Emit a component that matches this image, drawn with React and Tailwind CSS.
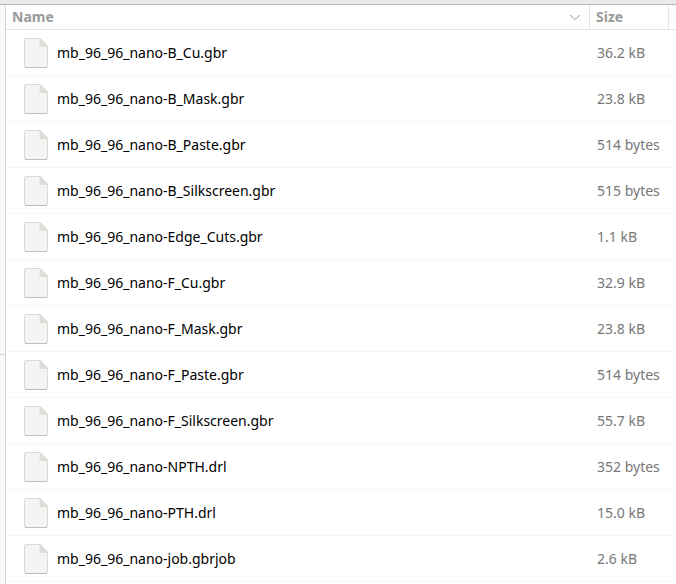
const files = [
  { name: 'mb_96_96_nano-B_Cu.gbr', size: '36.2 kB' },
  { name: 'mb_96_96_nano-B_Mask.gbr', size: '23.8 kB' },
  { name: 'mb_96_96_nano-B_Paste.gbr', size: '514 bytes' },
  { name: 'mb_96_96_nano-B_Silkscreen.gbr', size: '515 bytes' },
  { name: 'mb_96_96_nano-Edge_Cuts.gbr', size: '1.1 kB' },
  { name: 'mb_96_96_nano-F_Cu.gbr', size: '32.9 kB' },
  { name: 'mb_96_96_nano-F_Mask.gbr', size: '23.8 kB' },
  { name: 'mb_96_96_nano-F_Paste.gbr', size: '514 bytes' },
  { name: 'mb_96_96_nano-F_Silkscreen.gbr', size: '55.7 kB' },
  { name: 'mb_96_96_nano-NPTH.drl', size: '352 bytes' },
  { name: 'mb_96_96_nano-PTH.drl', size: '15.0 kB' },
  { name: 'mb_96_96_nano-job.gbrjob', size: '2.6 kB' },
]

const FileIcon = () => (
  <svg className="h-8 w-6 shrink-0" viewBox="0 0 24 32" aria-hidden="true">
    <path d="M2 1.5H16L23.5 9V29a1.5 1.5 0 0 1-1.5 1.5H2A1.5 1.5 0 0 1 .5 29V3A1.5 1.5 0 0 1 2 1.5Z" fill="#f5f4f2" stroke="#dad9d6" />
    <path d="M1 30.5H23" fill="none" stroke="#bebdb9" />
    <path d="M16 1L24 9V10H17.5A2 2 0 0 1 15.5 8V1Z" fill="#dddcd9" />
  </svg>
)

const SortIcon = () => (
  <svg className="h-2 w-3" viewBox="0 0 12 8" fill="none" stroke="#929595" aria-hidden="true">
    <path d="M1 2L6 6.5L11 2" />
  </svg>
)

const App = () => {
  return (
    <div className="flex min-h-screen flex-col bg-white font-['Noto_Sans','Open_Sans',sans-serif] text-sm">
      <div className="h-[5px] border-b border-[#b8b8b8] bg-[#ebebeb]" />
      <div className="flex flex-1">
        <aside className="flex w-[6px] shrink-0 flex-col border-r border-[#d5d5d5] bg-[#fafafa]">
          <div className="h-[350px] border-b border-[#d5d5d5]" />
        </aside>
        <main className="flex-1">
          <table className="w-full table-fixed border-separate border-spacing-0 text-left">
            <colgroup>
              <col />
              <col className="w-[79px]" />
              <col className="w-[7px]" />
            </colgroup>
            <thead className="text-[#9a9a9a]">
              <tr className="h-[25px]">
                <th className="border-r border-b border-[#e4e4e4] p-0">
                  <button className="flex w-full items-center justify-between pr-2 pl-[6px] leading-6 font-bold">
                    Name
                    <SortIcon />
                  </button>
                </th>
                <th className="border-r border-b border-[#e4e4e4] p-0">
                  <button className="block w-full pl-[6px] text-left leading-6 font-bold">Size</button>
                </th>
                <td className="border-b border-[#e4e4e4] p-0" />
              </tr>
            </thead>
            <tbody>
              {files.map((file) => (
                <tr key={file.name} className="h-[46px]">
                  <td className="border-b border-[#f7f7f7] p-0 pl-[18px]">
                    <div className="flex items-center gap-[9px] text-black">
                      <FileIcon />
                      {file.name}
                    </div>
                  </td>
                  <td className="border-b border-[#f7f7f7] p-0 pl-[7px] whitespace-nowrap text-[#777]">{file.size}</td>
                  <td className="border-b border-[#f7f7f7] p-0" />
                </tr>
              ))}
            </tbody>
          </table>
        </main>
      </div>
    </div>
  )
}

export default App
